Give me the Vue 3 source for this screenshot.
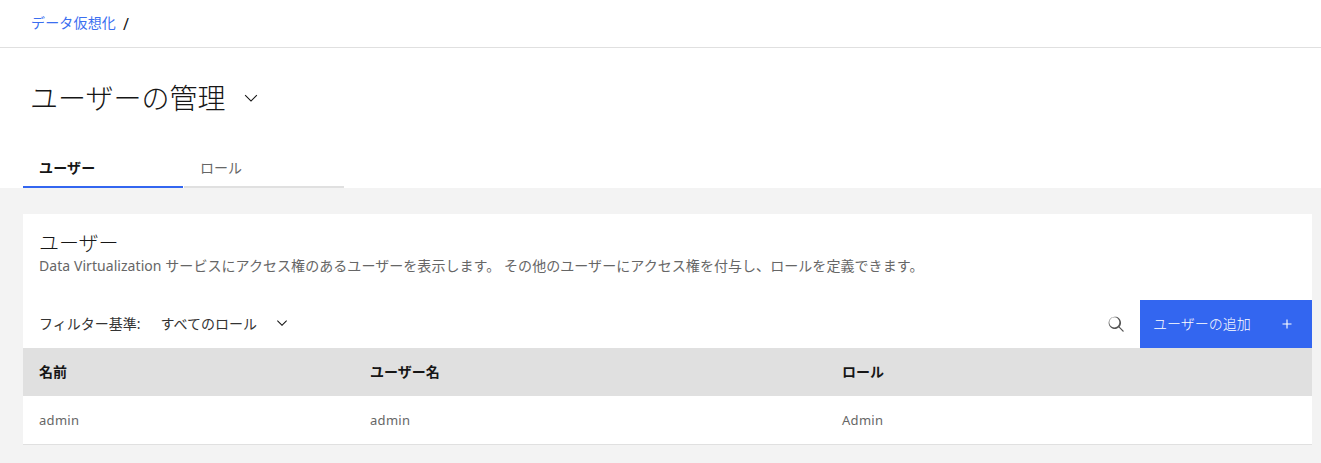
<script setup>
const columns = [
  { label: '名前', key: 'name' },
  { label: 'ユーザー名', key: 'username' },
  { label: 'ロール', key: 'role' }
];

const rows = [{ name: 'admin', username: 'admin', role: 'Admin' }];
</script>

<template>
  <div class="page">
    <header class="breadcrumb">
      <a class="crumb-link" href="#">データ仮想化</a>
      <span class="crumb-sep">/</span>
    </header>

    <section class="title-area">
      <div class="title-row">
        <h1 class="title">ユーザーの管理</h1>
        <svg class="title-chevron" width="20" height="20" viewBox="0 0 16 16">
          <path d="M8 11 3 6l.6-.6L8 9.8l4.4-4.4.6.6z" />
        </svg>
      </div>
      <nav class="tabs">
        <div class="tab active">ユーザー</div>
        <div class="tab">ロール</div>
      </nav>
    </section>

    <main class="content">
      <section class="panel">
        <div class="panel-head">
          <h2 class="panel-title">ユーザー</h2>
          <p class="panel-desc">Data Virtualization サービスにアクセス権のあるユーザーを表示します。 その他のユーザーにアクセス権を付与し、ロールを定義できます。</p>
        </div>

        <div class="toolbar">
          <span class="filter-label">フィルター基準:</span>
          <span class="filter-value">すべてのロール</span>
          <svg class="filter-chevron" width="16" height="16" viewBox="0 0 16 16">
            <path d="M8 11 3 6l.7-.7L8 9.6l4.3-4.3.7.7z" />
          </svg>
          <svg class="search-icon" width="18" height="18" viewBox="0 0 16 16">
            <path d="m15 14.300-3.800-3.800a5.500 5.500 0 1 0-.7.7l3.800 3.800.7-.7zM2 6.500a4.500 4.500 0 1 1 9 0 4.500 4.500 0 0 1-9 0z" />
          </svg>
          <button class="add-btn">
            <span>ユーザーの追加</span>
            <svg width="18" height="18" viewBox="0 0 16 16">
              <path d="M8.500 4h-1v3.500H4v1h3.500V12h1V8.500H12v-1H8.500z" />
            </svg>
          </button>
        </div>

        <table class="table">
          <thead>
            <tr>
              <th v-for="col in columns" :key="col.key" :class="'col-' + col.key">{{ col.label }}</th>
            </tr>
          </thead>
          <tbody>
            <tr v-for="row in rows" :key="row.username">
              <td v-for="col in columns" :key="col.key">{{ row[col.key] }}</td>
            </tr>
          </tbody>
        </table>
      </section>
    </main>
  </div>
</template>

<style>
html,
body {
  margin: 0;
  background: #f3f3f3;
}
</style>

<style scoped>
.page {
  font-family: "Noto Sans", "Noto Sans CJK JP", sans-serif;
  color: #161616;
  height: 463px;
  overflow: hidden;
  background: #f3f3f3;
}

.breadcrumb {
  height: 47px;
  background: #fff;
  border-bottom: 1px solid #e0e0e0;
  display: flex;
  align-items: center;
  padding-left: 31px;
  font-size: 14px;
  letter-spacing: 0.16px;
}

.crumb-link {
  color: #3b6ff0;
  text-decoration: none;
  position: relative;
  top: -2px;
}

.crumb-sep {
  margin-left: 7px;
  font-size: 16px;
}

.title-area {
  background: #fff;
  height: 140px;
  padding-left: 23px;
  display: flex;
  flex-direction: column;
  justify-content: space-between;
}

.title-row {
  display: flex;
  align-items: center;
  padding: 30px 0 0 7px;
}

.title {
  margin: 0;
  font-size: 28px;
  font-weight: 300;
  line-height: 40px;
  color: #161616;
}

.title-chevron {
  margin-left: 16px;
  fill: #161616;
}

.tabs {
  display: flex;
  gap: 1px;
}

.tab {
  width: 160px;
  height: 38px;
  box-sizing: border-box;
  padding: 9px 0 0 16px;
  font-size: 14px;
  line-height: 18px;
  color: #666;
  border-bottom: 2px solid #e0e0e0;
}

.tab.active {
  font-weight: 700;
  letter-spacing: 0.16px;
  color: #161616;
  border-bottom-color: #3366f0;
}

.content {
  padding: 26px 9px 0 23px;
}

.panel {
  background: #fff;
}

.panel-head {
  padding: 17px 16px 0;
  height: 69px;
}

.panel-title {
  margin: 0;
  font-size: 20px;
  font-weight: 300;
  line-height: 26px;
}

.panel-desc {
  margin: 0;
  font-size: 14px;
  line-height: 18px;
  letter-spacing: 0.06px;
  color: #666;
  white-space: nowrap;
}

.toolbar {
  height: 48px;
  display: flex;
  align-items: center;
  padding: 0 0 2px 16px;
  box-sizing: border-box;
  font-size: 14px;
  color: #333;
}

.filter-value {
  margin-left: 20px;
}

.filter-chevron {
  margin-left: 17px;
  fill: #161616;
}

.search-icon {
  margin-left: auto;
  margin-right: 15px;
  fill: #565656;
  position: relative;
  top: 1px;
}

.add-btn {
  width: 172px;
  height: 48px;
  margin-bottom: -2px;
  border: 0;
  padding: 0 16px 0 13px;
  background: #3366f0;
  color: #fff;
  font: inherit;
  font-weight: 300;
  display: flex;
  align-items: center;
  justify-content: space-between;
}

.add-btn span {
  position: relative;
  top: -1px;
}

.add-btn svg {
  fill: #fff;
}

.table {
  width: 100%;
  border-collapse: collapse;
  table-layout: fixed;
  font-size: 14px;
}

.table th {
  box-sizing: border-box;
  height: 48px;
  padding: 0 16px 2px;
  background: #e0e0e0;
  text-align: left;
  font-weight: 700;
}

.col-name {
  width: 331px;
}

.col-username {
  width: 472px;
}

.table td {
  box-sizing: border-box;
  height: 48px;
  padding: 0 16px;
  color: #666;
  font-size: 13px;
  letter-spacing: 0.3px;
  border-bottom: 1px solid #e0e0e0;
}
</style>
